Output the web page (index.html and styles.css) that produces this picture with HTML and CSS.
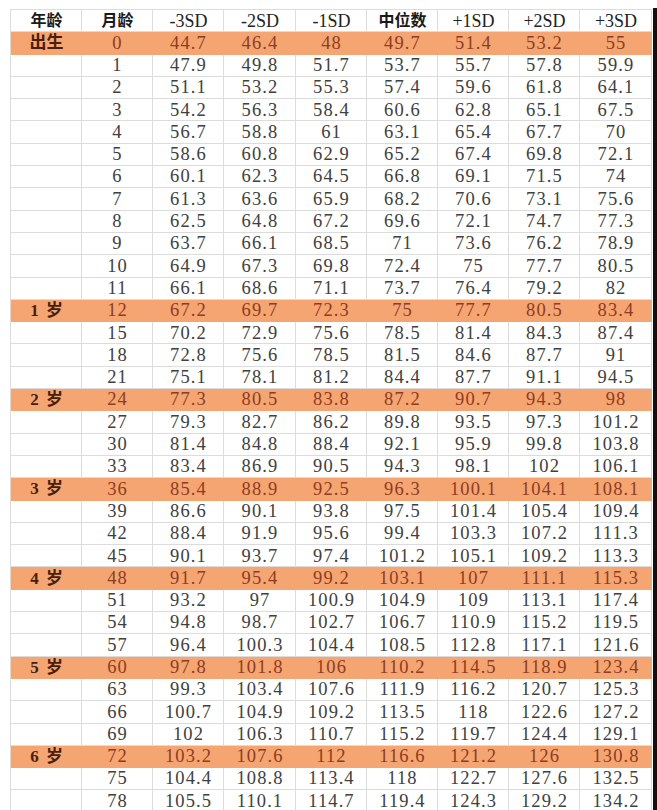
FILE: index.html
```html
<!DOCTYPE html>
<html lang="zh">
<head>
<meta charset="utf-8">
<title>身高标准表</title>
<link rel="stylesheet" href="styles.css">
</head>
<body>
<div class="page">
  <div class="sheet">
    <div class="row head"><div class="c">年龄</div><div class="c">月龄</div><div class="c sd">-3SD</div><div class="c sd">-2SD</div><div class="c sd">-1SD</div><div class="c">中位数</div><div class="c sd">+1SD</div><div class="c sd">+2SD</div><div class="c sd">+3SD</div></div>
    <div class="row year"><div class="c age">出生</div><div class="c">0</div><div class="c">44.7</div><div class="c">46.4</div><div class="c">48</div><div class="c">49.7</div><div class="c">51.4</div><div class="c">53.2</div><div class="c">55</div></div>
    <div class="row"><div class="c"></div><div class="c">1</div><div class="c">47.9</div><div class="c">49.8</div><div class="c">51.7</div><div class="c">53.7</div><div class="c">55.7</div><div class="c">57.8</div><div class="c">59.9</div></div>
    <div class="row"><div class="c"></div><div class="c">2</div><div class="c">51.1</div><div class="c">53.2</div><div class="c">55.3</div><div class="c">57.4</div><div class="c">59.6</div><div class="c">61.8</div><div class="c">64.1</div></div>
    <div class="row"><div class="c"></div><div class="c">3</div><div class="c">54.2</div><div class="c">56.3</div><div class="c">58.4</div><div class="c">60.6</div><div class="c">62.8</div><div class="c">65.1</div><div class="c">67.5</div></div>
    <div class="row"><div class="c"></div><div class="c">4</div><div class="c">56.7</div><div class="c">58.8</div><div class="c">61</div><div class="c">63.1</div><div class="c">65.4</div><div class="c">67.7</div><div class="c">70</div></div>
    <div class="row"><div class="c"></div><div class="c">5</div><div class="c">58.6</div><div class="c">60.8</div><div class="c">62.9</div><div class="c">65.2</div><div class="c">67.4</div><div class="c">69.8</div><div class="c">72.1</div></div>
    <div class="row"><div class="c"></div><div class="c">6</div><div class="c">60.1</div><div class="c">62.3</div><div class="c">64.5</div><div class="c">66.8</div><div class="c">69.1</div><div class="c">71.5</div><div class="c">74</div></div>
    <div class="row"><div class="c"></div><div class="c">7</div><div class="c">61.3</div><div class="c">63.6</div><div class="c">65.9</div><div class="c">68.2</div><div class="c">70.6</div><div class="c">73.1</div><div class="c">75.6</div></div>
    <div class="row"><div class="c"></div><div class="c">8</div><div class="c">62.5</div><div class="c">64.8</div><div class="c">67.2</div><div class="c">69.6</div><div class="c">72.1</div><div class="c">74.7</div><div class="c">77.3</div></div>
    <div class="row"><div class="c"></div><div class="c">9</div><div class="c">63.7</div><div class="c">66.1</div><div class="c">68.5</div><div class="c">71</div><div class="c">73.6</div><div class="c">76.2</div><div class="c">78.9</div></div>
    <div class="row"><div class="c"></div><div class="c">10</div><div class="c">64.9</div><div class="c">67.3</div><div class="c">69.8</div><div class="c">72.4</div><div class="c">75</div><div class="c">77.7</div><div class="c">80.5</div></div>
    <div class="row"><div class="c"></div><div class="c">11</div><div class="c">66.1</div><div class="c">68.6</div><div class="c">71.1</div><div class="c">73.7</div><div class="c">76.4</div><div class="c">79.2</div><div class="c">82</div></div>
    <div class="row year"><div class="c age">1 岁</div><div class="c">12</div><div class="c">67.2</div><div class="c">69.7</div><div class="c">72.3</div><div class="c">75</div><div class="c">77.7</div><div class="c">80.5</div><div class="c">83.4</div></div>
    <div class="row"><div class="c"></div><div class="c">15</div><div class="c">70.2</div><div class="c">72.9</div><div class="c">75.6</div><div class="c">78.5</div><div class="c">81.4</div><div class="c">84.3</div><div class="c">87.4</div></div>
    <div class="row"><div class="c"></div><div class="c">18</div><div class="c">72.8</div><div class="c">75.6</div><div class="c">78.5</div><div class="c">81.5</div><div class="c">84.6</div><div class="c">87.7</div><div class="c">91</div></div>
    <div class="row"><div class="c"></div><div class="c">21</div><div class="c">75.1</div><div class="c">78.1</div><div class="c">81.2</div><div class="c">84.4</div><div class="c">87.7</div><div class="c">91.1</div><div class="c">94.5</div></div>
    <div class="row year"><div class="c age">2 岁</div><div class="c">24</div><div class="c">77.3</div><div class="c">80.5</div><div class="c">83.8</div><div class="c">87.2</div><div class="c">90.7</div><div class="c">94.3</div><div class="c">98</div></div>
    <div class="row"><div class="c"></div><div class="c">27</div><div class="c">79.3</div><div class="c">82.7</div><div class="c">86.2</div><div class="c">89.8</div><div class="c">93.5</div><div class="c">97.3</div><div class="c">101.2</div></div>
    <div class="row"><div class="c"></div><div class="c">30</div><div class="c">81.4</div><div class="c">84.8</div><div class="c">88.4</div><div class="c">92.1</div><div class="c">95.9</div><div class="c">99.8</div><div class="c">103.8</div></div>
    <div class="row"><div class="c"></div><div class="c">33</div><div class="c">83.4</div><div class="c">86.9</div><div class="c">90.5</div><div class="c">94.3</div><div class="c">98.1</div><div class="c">102</div><div class="c">106.1</div></div>
    <div class="row year"><div class="c age">3 岁</div><div class="c">36</div><div class="c">85.4</div><div class="c">88.9</div><div class="c">92.5</div><div class="c">96.3</div><div class="c">100.1</div><div class="c">104.1</div><div class="c">108.1</div></div>
    <div class="row"><div class="c"></div><div class="c">39</div><div class="c">86.6</div><div class="c">90.1</div><div class="c">93.8</div><div class="c">97.5</div><div class="c">101.4</div><div class="c">105.4</div><div class="c">109.4</div></div>
    <div class="row"><div class="c"></div><div class="c">42</div><div class="c">88.4</div><div class="c">91.9</div><div class="c">95.6</div><div class="c">99.4</div><div class="c">103.3</div><div class="c">107.2</div><div class="c">111.3</div></div>
    <div class="row"><div class="c"></div><div class="c">45</div><div class="c">90.1</div><div class="c">93.7</div><div class="c">97.4</div><div class="c">101.2</div><div class="c">105.1</div><div class="c">109.2</div><div class="c">113.3</div></div>
    <div class="row year"><div class="c age">4 岁</div><div class="c">48</div><div class="c">91.7</div><div class="c">95.4</div><div class="c">99.2</div><div class="c">103.1</div><div class="c">107</div><div class="c">111.1</div><div class="c">115.3</div></div>
    <div class="row"><div class="c"></div><div class="c">51</div><div class="c">93.2</div><div class="c">97</div><div class="c">100.9</div><div class="c">104.9</div><div class="c">109</div><div class="c">113.1</div><div class="c">117.4</div></div>
    <div class="row"><div class="c"></div><div class="c">54</div><div class="c">94.8</div><div class="c">98.7</div><div class="c">102.7</div><div class="c">106.7</div><div class="c">110.9</div><div class="c">115.2</div><div class="c">119.5</div></div>
    <div class="row"><div class="c"></div><div class="c">57</div><div class="c">96.4</div><div class="c">100.3</div><div class="c">104.4</div><div class="c">108.5</div><div class="c">112.8</div><div class="c">117.1</div><div class="c">121.6</div></div>
    <div class="row year"><div class="c age">5 岁</div><div class="c">60</div><div class="c">97.8</div><div class="c">101.8</div><div class="c">106</div><div class="c">110.2</div><div class="c">114.5</div><div class="c">118.9</div><div class="c">123.4</div></div>
    <div class="row"><div class="c"></div><div class="c">63</div><div class="c">99.3</div><div class="c">103.4</div><div class="c">107.6</div><div class="c">111.9</div><div class="c">116.2</div><div class="c">120.7</div><div class="c">125.3</div></div>
    <div class="row"><div class="c"></div><div class="c">66</div><div class="c">100.7</div><div class="c">104.9</div><div class="c">109.2</div><div class="c">113.5</div><div class="c">118</div><div class="c">122.6</div><div class="c">127.2</div></div>
    <div class="row"><div class="c"></div><div class="c">69</div><div class="c">102</div><div class="c">106.3</div><div class="c">110.7</div><div class="c">115.2</div><div class="c">119.7</div><div class="c">124.4</div><div class="c">129.1</div></div>
    <div class="row year"><div class="c age">6 岁</div><div class="c">72</div><div class="c">103.2</div><div class="c">107.6</div><div class="c">112</div><div class="c">116.6</div><div class="c">121.2</div><div class="c">126</div><div class="c">130.8</div></div>
    <div class="row"><div class="c"></div><div class="c">75</div><div class="c">104.4</div><div class="c">108.8</div><div class="c">113.4</div><div class="c">118</div><div class="c">122.7</div><div class="c">127.6</div><div class="c">132.5</div></div>
    <div class="row"><div class="c"></div><div class="c">78</div><div class="c">105.5</div><div class="c">110.1</div><div class="c">114.7</div><div class="c">119.4</div><div class="c">124.3</div><div class="c">129.2</div><div class="c">134.2</div></div>
  </div>
  <div class="edge"></div>
</div>
</body>
</html>
```

FILE: styles.css
```css
html, body {
  margin: 0;
  padding: 0;
  background: #ffffff;
}

.page {
  width: 657px;
  height: 810px;
  overflow: hidden;
  display: flex;
  align-items: flex-start;
  padding: 9px 0 0 10px;
  box-sizing: border-box;
  gap: 1px;
}

.sheet {
  width: 642px;
  flex: none;
  border-top: 1px solid #dcdcdc;
  border-left: 1px solid #dcdcdc;
  box-sizing: border-box;
}

.row {
  display: grid;
  grid-template-columns: 71px 71px 71px 72px 71px 71px 71px 71px 1fr;
  height: 22.3px;
  box-sizing: border-box;
  border-bottom: 1px solid #dcdcdc;
}

.c {
  border-right: 1px solid #dcdcdc;
  display: flex;
  align-items: center;
  justify-content: center;
  padding-left: 1px;
  font-family: "Liberation Serif", "Noto Sans CJK SC", serif;
  font-size: 18.5px;
  letter-spacing: 1.1px;
  color: #404040;
  line-height: 1;
  white-space: nowrap;
  overflow: hidden;
}

.head .c {
  font-family: "Liberation Serif", "Noto Sans CJK SC", serif;
  font-weight: 700;
  font-size: 16px;
  letter-spacing: 0;
  color: #1a1a1a;
}

.head .c.sd {
  font-weight: 400;
  font-size: 18px;
  color: #222;
}

.year {
  background: #f5a571;
  border-bottom-color: #f5a571;
}

.year .c {
  border-right-color: transparent;
  color: #8e3c22;
}

.year .c.age {
  font-weight: 700;
  font-size: 17px;
  letter-spacing: 0;
  color: #4a1e0c;
  word-spacing: 3px;
}

.edge {
  width: 4px;
  height: 802px;
  margin-top: -1px;
  background: #111111;
  flex: none;
}
```
